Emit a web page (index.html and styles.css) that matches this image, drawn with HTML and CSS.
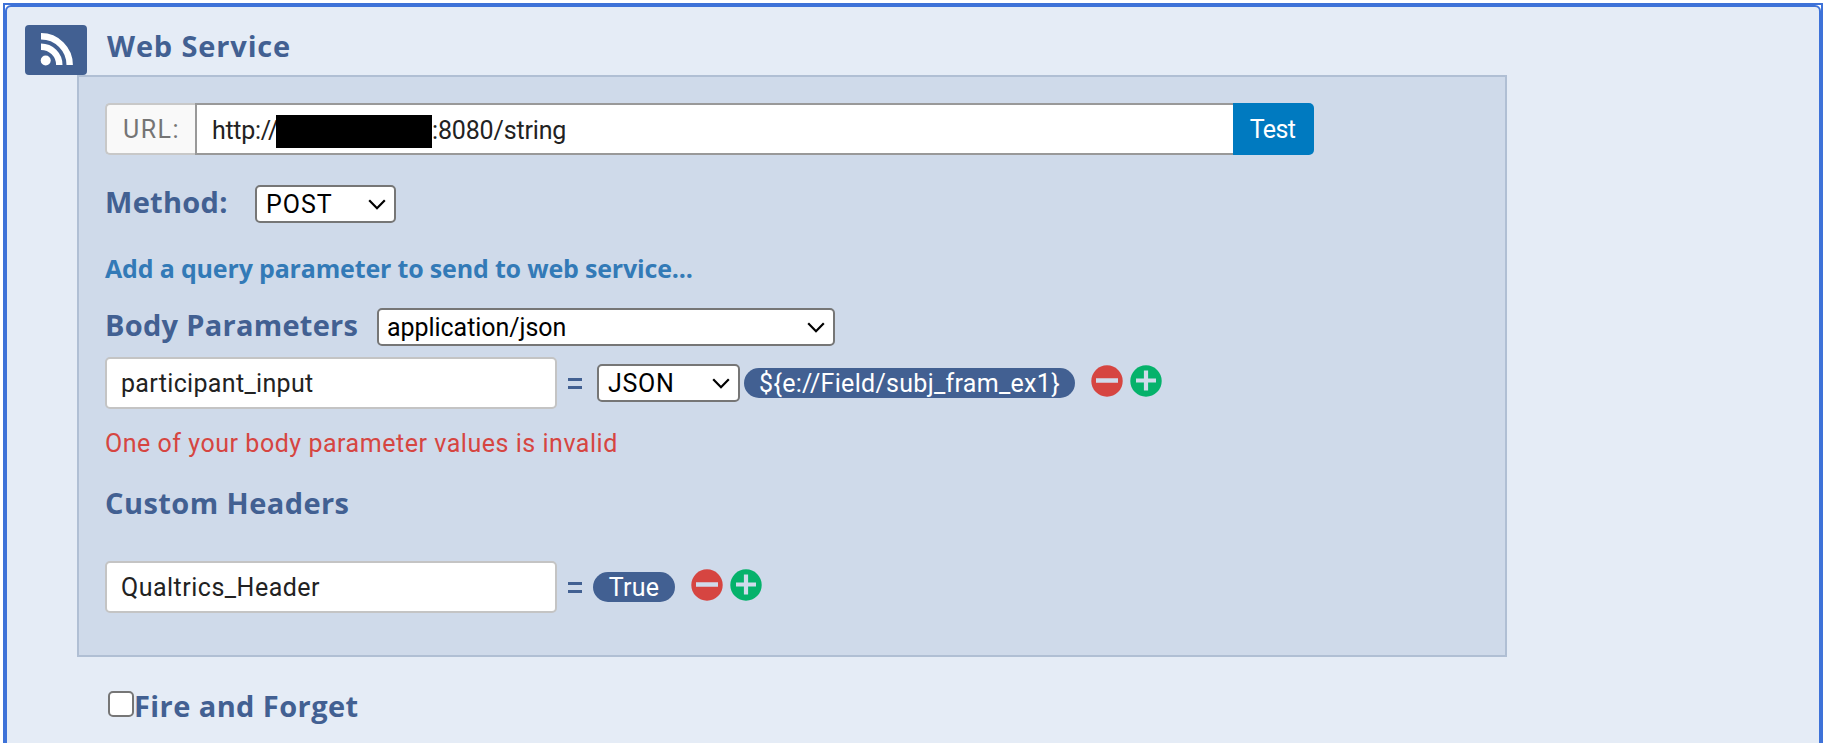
FILE: index.html
```html
<!DOCTYPE html>
<html lang="en">
<head>
<meta charset="utf-8">
<title>Web Service</title>
<link rel="stylesheet" href="styles.css">
</head>
<body>
<svg class="defs" width="0" height="0">
  <symbol id="chevron" viewBox="0 0 18 11"><path d="M1.2 1.2 9 9.2l7.800-8" fill="none" stroke="#000" stroke-width="2.200"/></symbol>
  <symbol id="minus" viewBox="0 0 32 32"><circle cx="16" cy="16" r="15.700" fill="#d64541"/><path d="M5 15.500h22" stroke="#d0dbeb" stroke-width="4.500"/></symbol>
  <symbol id="plus" viewBox="0 0 32 32"><circle cx="16" cy="16" r="15.700" fill="#05b26b"/><path d="M6 15.500h20M16 5.500v20" stroke="#d0dbeb" stroke-width="4.200"/></symbol>
</svg>
<div class="frame">
  <main class="element">
    <header class="head">
      <span class="badge">
        <svg width="62" height="50" viewBox="0 0 62 50" fill="none" stroke="#fff" stroke-width="6.400">
          <circle cx="20.700" cy="35.500" r="5" fill="#fff" stroke="none"/>
          <path d="M16 21.700A18.300 18.300 0 0 1 34.300 40M16 11.300A28.700 28.700 0 0 1 44.700 40"/>
        </svg>
      </span>
      <h1 class="title title-main">Web Service</h1>
    </header>

    <section class="panel">
      <div class="url-row">
        <span class="addon">URL:</span>
        <div class="url-field"><span class="scheme">http://</span><span class="redacted"></span><span class="path">:8080/string</span></div>
        <button class="test">Test</button>
      </div>

      <div class="row method-row">
        <h2 class="title title-method">Method:</h2>
        <div class="select select-method"><span>POST</span><svg width="18" height="11"><use href="#chevron"/></svg></div>
      </div>

      <a class="add-link">Add a query parameter to send to web service...</a>

      <div class="row body-row">
        <h2 class="title title-body">Body Parameters</h2>
        <div class="select select-body"><span>application/json</span><svg width="18" height="11"><use href="#chevron"/></svg></div>
      </div>

      <div class="row param-row">
        <div class="field field-param">participant_input</div>
        <span class="equals"></span>
        <div class="select select-json"><span>JSON</span><svg width="18" height="11"><use href="#chevron"/></svg></div>
        <span class="pill pill-field">${e://Field/subj_fram_ex1}</span>
        <span class="actions"><svg width="32" height="32"><use href="#minus"/></svg><svg width="32" height="32"><use href="#plus"/></svg></span>
      </div>

      <p class="error">One of your body parameter values is invalid</p>

      <h2 class="title title-headers">Custom Headers</h2>

      <div class="row header-row">
        <div class="field field-header">Qualtrics_Header</div>
        <span class="equals"></span>
        <span class="pill pill-true">True</span>
        <span class="actions"><svg width="32" height="32"><use href="#minus"/></svg><svg width="32" height="32"><use href="#plus"/></svg></span>
      </div>
    </section>

    <label class="fire"><span class="checkbox"></span><span class="title title-fire">Fire and Forget</span></label>
  </main>
</div>
</body>
</html>
```
FILE: styles.css
```css
* { box-sizing: border-box; }
html { height: 100%; overflow: hidden; }
body {
  margin: 0;
  padding: 3px 4px 0 3px;
  height: 743px;
  overflow: hidden;
  background: #fff;
  font-family: Roboto, sans-serif;
  font-size: 25px;
  color: #222;
}
svg { display: block; flex: none; }
.defs { position: absolute; }
.frame {
  height: 760px;
  border: 2px solid #3e72d8;
  background: #fff;
}
.element {
  height: 100%;
  padding: 18px 0 0 18px;
  border: 2px solid #3e72d8;
  border-radius: 6px;
  background: #e5ecf6;
}
.head { display: flex; height: 50px; }
.badge { width: 62px; height: 50px; border-radius: 4px; background: #426092; }
.title {
  margin: 0;
  font: 700 29px/36px "Open Sans", sans-serif;
  color: #426092;
  white-space: nowrap;
}
.title-main { margin: 3px 0 0 20px; letter-spacing: 0.85px; }
.panel {
  width: 1430px;
  height: 582px;
  margin-left: 52px;
  padding: 26px 0 0 26px;
  border: 2px solid #b0bfd4;
  background: #cfdaea;
}
.row { display: flex; align-items: center; }

.url-row { display: flex; width: 1209px; height: 52px; line-height: 49px; }
.addon {
  width: 90px;
  padding-left: 16px;
  border: 2px solid #c8c8c8;
  border-right: 0;
  border-radius: 5px 0 0 5px;
  background: #f9f9f9;
  color: #757575;
  letter-spacing: 1.5px;
}
.url-field {
  flex: 1;
  display: flex;
  align-items: center;
  padding: 2px 0 0 15px;
  border: 2px solid #999;
  border-right: 0;
  background: #fff;
}
.scheme { width: 64px; letter-spacing: -0.3px; }
.redacted { position: relative; width: 156px; height: 33px; margin: 2px 0 0; background: #000; }
.path { letter-spacing: -0.15px; }
.test {
  width: 81px;
  padding: 2px 2px 0 0;
  border: 0;
  border-radius: 0 5px 5px 0;
  background: #007ac0;
  font: 25px/50px Roboto, sans-serif;
  letter-spacing: -0.6px;
  color: #fff;
}

.select {
  display: flex;
  align-items: center;
  justify-content: space-between;
  height: 38px;
  padding: 0 8px 0 9px;
  border: 2px solid #767676;
  border-radius: 5px;
  background: #fff;
  color: #000;
}
.method-row { margin-top: 30px; height: 38px; }
.title-method { width: 150px; padding-bottom: 4px; letter-spacing: 0.3px; }
.select-method { width: 141px; letter-spacing: 1px; }

.add-link {
  display: block;
  margin-top: 27px;
  font: 700 25px/36px "Open Sans", sans-serif;
  letter-spacing: -0.17px;
  color: #337ab7;
}
.body-row { margin-top: 22px; height: 38px; }
.title-body { width: 272px; padding-bottom: 4px; letter-spacing: 0.27px; }
.select-body { width: 458px; padding-left: 8px; letter-spacing: -0.05px; }

.field {
  width: 452px;
  height: 52px;
  padding-left: 14px;
  border: 2px solid #c4c4c4;
  border-radius: 5px;
  background: #fff;
  line-height: 49px;
}
.param-row { margin-top: 11px; }
.field-param { letter-spacing: 0.33px; }
.field-header { letter-spacing: 0.49px; }
.equals {
  width: 14px;
  height: 11px;
  margin-left: 11px;
  border: solid #426092;
  border-width: 3px 0;
}
.select-json { width: 143px; margin-left: 15px; letter-spacing: 0.7px; }
.pill {
  height: 30px;
  border-radius: 15px;
  background: #426092;
  color: #fff;
  line-height: 31px;
  text-align: center;
  white-space: nowrap;
}
.pill-field { width: 331px; margin-left: 4px; letter-spacing: 0.3px; }
.pill-true { width: 82px; margin-left: 11px; letter-spacing: 0.25px; }
.actions { display: flex; gap: 7px; margin: 0 0 4px 16px; }

.error {
  margin: 17px 0 0;
  line-height: 36px;
  letter-spacing: 0.53px;
  color: #d64541;
}
.title-headers { margin-top: 23px; letter-spacing: 0.43px; }
.header-row { margin-top: 40px; }

.fire { display: flex; margin: 31px 0 0 83px; }
.checkbox {
  width: 26px;
  height: 26px;
  margin-top: 3px;
  border: 2px solid #767676;
  border-radius: 5px;
  background: #fff;
}
.title-fire { letter-spacing: 0.42px; }
```
